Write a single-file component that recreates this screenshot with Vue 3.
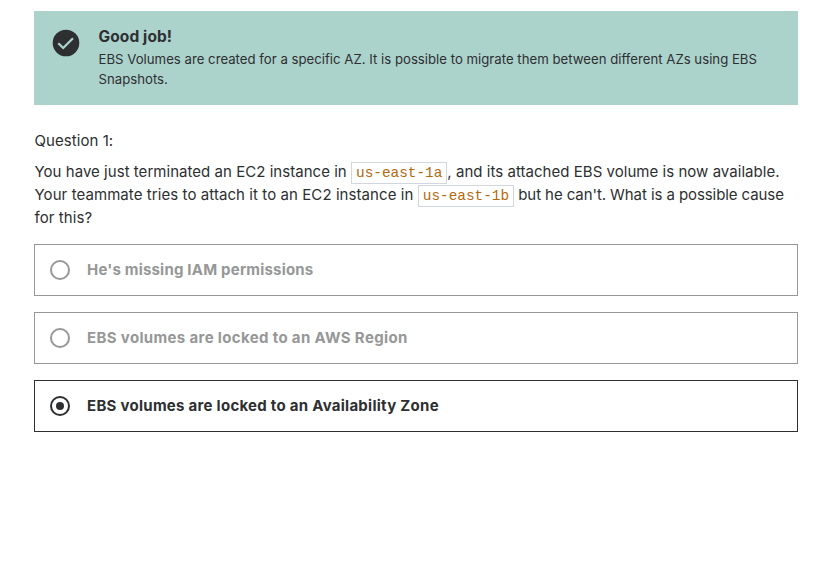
<script setup>
const options = [
  { text: "He's missing IAM permissions", selected: false, tracking: '0.2px' },
  { text: 'EBS volumes are locked to an AWS Region', selected: false, tracking: '0.35px' },
  { text: 'EBS volumes are locked to an Availability Zone', selected: true, tracking: '0.27px' }
]
</script>

<template>
  <main class="quiz">
    <section class="banner">
      <svg class="check" viewBox="0 0 28 28" width="28" height="28">
        <circle cx="14" cy="14" r="13.3" fill="#2d2f31" />
        <path d="M6.3 14.2 11.2 19 21 9.3" fill="none" stroke="#acd2cc" stroke-width="2.3" />
      </svg>
      <div>
        <div class="title">Good job!</div>
        <p class="note">EBS Volumes are created for a specific AZ. It is possible to migrate them between different AZs using EBS<br>Snapshots.</p>
      </div>
    </section>
    <div class="label">Question 1:</div>
    <p class="question">
      <span class="t1">You have just terminated an EC2 instance in </span><code>us-east-1a</code><span class="t1">, and its attached EBS volume is now available.</span><br>
      <span class="t2">Your teammate tries to attach it to an EC2 instance in </span><code>us-east-1b</code><span class="t3"> but he can't. What is a possible cause</span><br>
      <span class="t4">for this?</span>
    </p>
    <ul class="options">
      <li v-for="o in options" :key="o.text" class="option" :class="{ selected: o.selected }">
        <span class="radio"></span>
        <span class="text" :style="{ letterSpacing: o.tracking }">{{ o.text }}</span>
      </li>
    </ul>
  </main>
</template>

<style>
body { background: #fff; }
</style>
<style scoped>
.quiz { padding: 11px 40px 0 34px; font-family: Inter, "Liberation Sans", sans-serif; color: #2d2f31; }
.banner { display: flex; gap: 18.5px; height: 94px; box-sizing: border-box; padding: 16px 18px; background: #acd2cc; }
.check { margin-top: 2px; flex: none; }
.title { font-size: 15.5px; line-height: 19px; font-weight: 700; letter-spacing: 0.1px; }
.note { margin: 3px 0 0; font-size: 13.2px; line-height: 20px; white-space: nowrap; letter-spacing: 0.005px; }
.label { margin-top: 25px; padding-left: 0.5px; font-size: 15px; line-height: 22px; letter-spacing: 0.06px; }
.question { margin: 8px 0 0; padding-left: 0.5px; font-size: 15px; line-height: 23px; white-space: nowrap; }
.t1 { letter-spacing: 0.035px; }
.t2 { letter-spacing: 0.076px; }
.t3 { letter-spacing: -0.08px; }
.t4 { letter-spacing: 0.08px; }
code { font-family: "Liberation Mono", monospace; font-size: 14.4px; line-height: 1; color: #b4690e; border: 1px solid #d1d7dc; padding: 2px 4px; background: #fff; }
.options { list-style: none; margin: 15px 0 0; padding: 0; display: grid; gap: 16px; }
.option { display: flex; align-items: center; box-sizing: border-box; height: 52px; border: 1px solid #969797; padding-left: 15px; gap: 17px; color: #969797; font-size: 15px; font-weight: 700; }
.text { margin-top: -2px; }
.selected { border-color: #2d2f31; color: #2d2f31; }
.radio { display: grid; place-items: center; width: 20px; height: 20px; box-sizing: border-box; border: 2px solid currentColor; border-radius: 50%; }
.selected .radio::after { content: ""; width: 8px; height: 8px; border-radius: 50%; background: currentColor; }
</style>
